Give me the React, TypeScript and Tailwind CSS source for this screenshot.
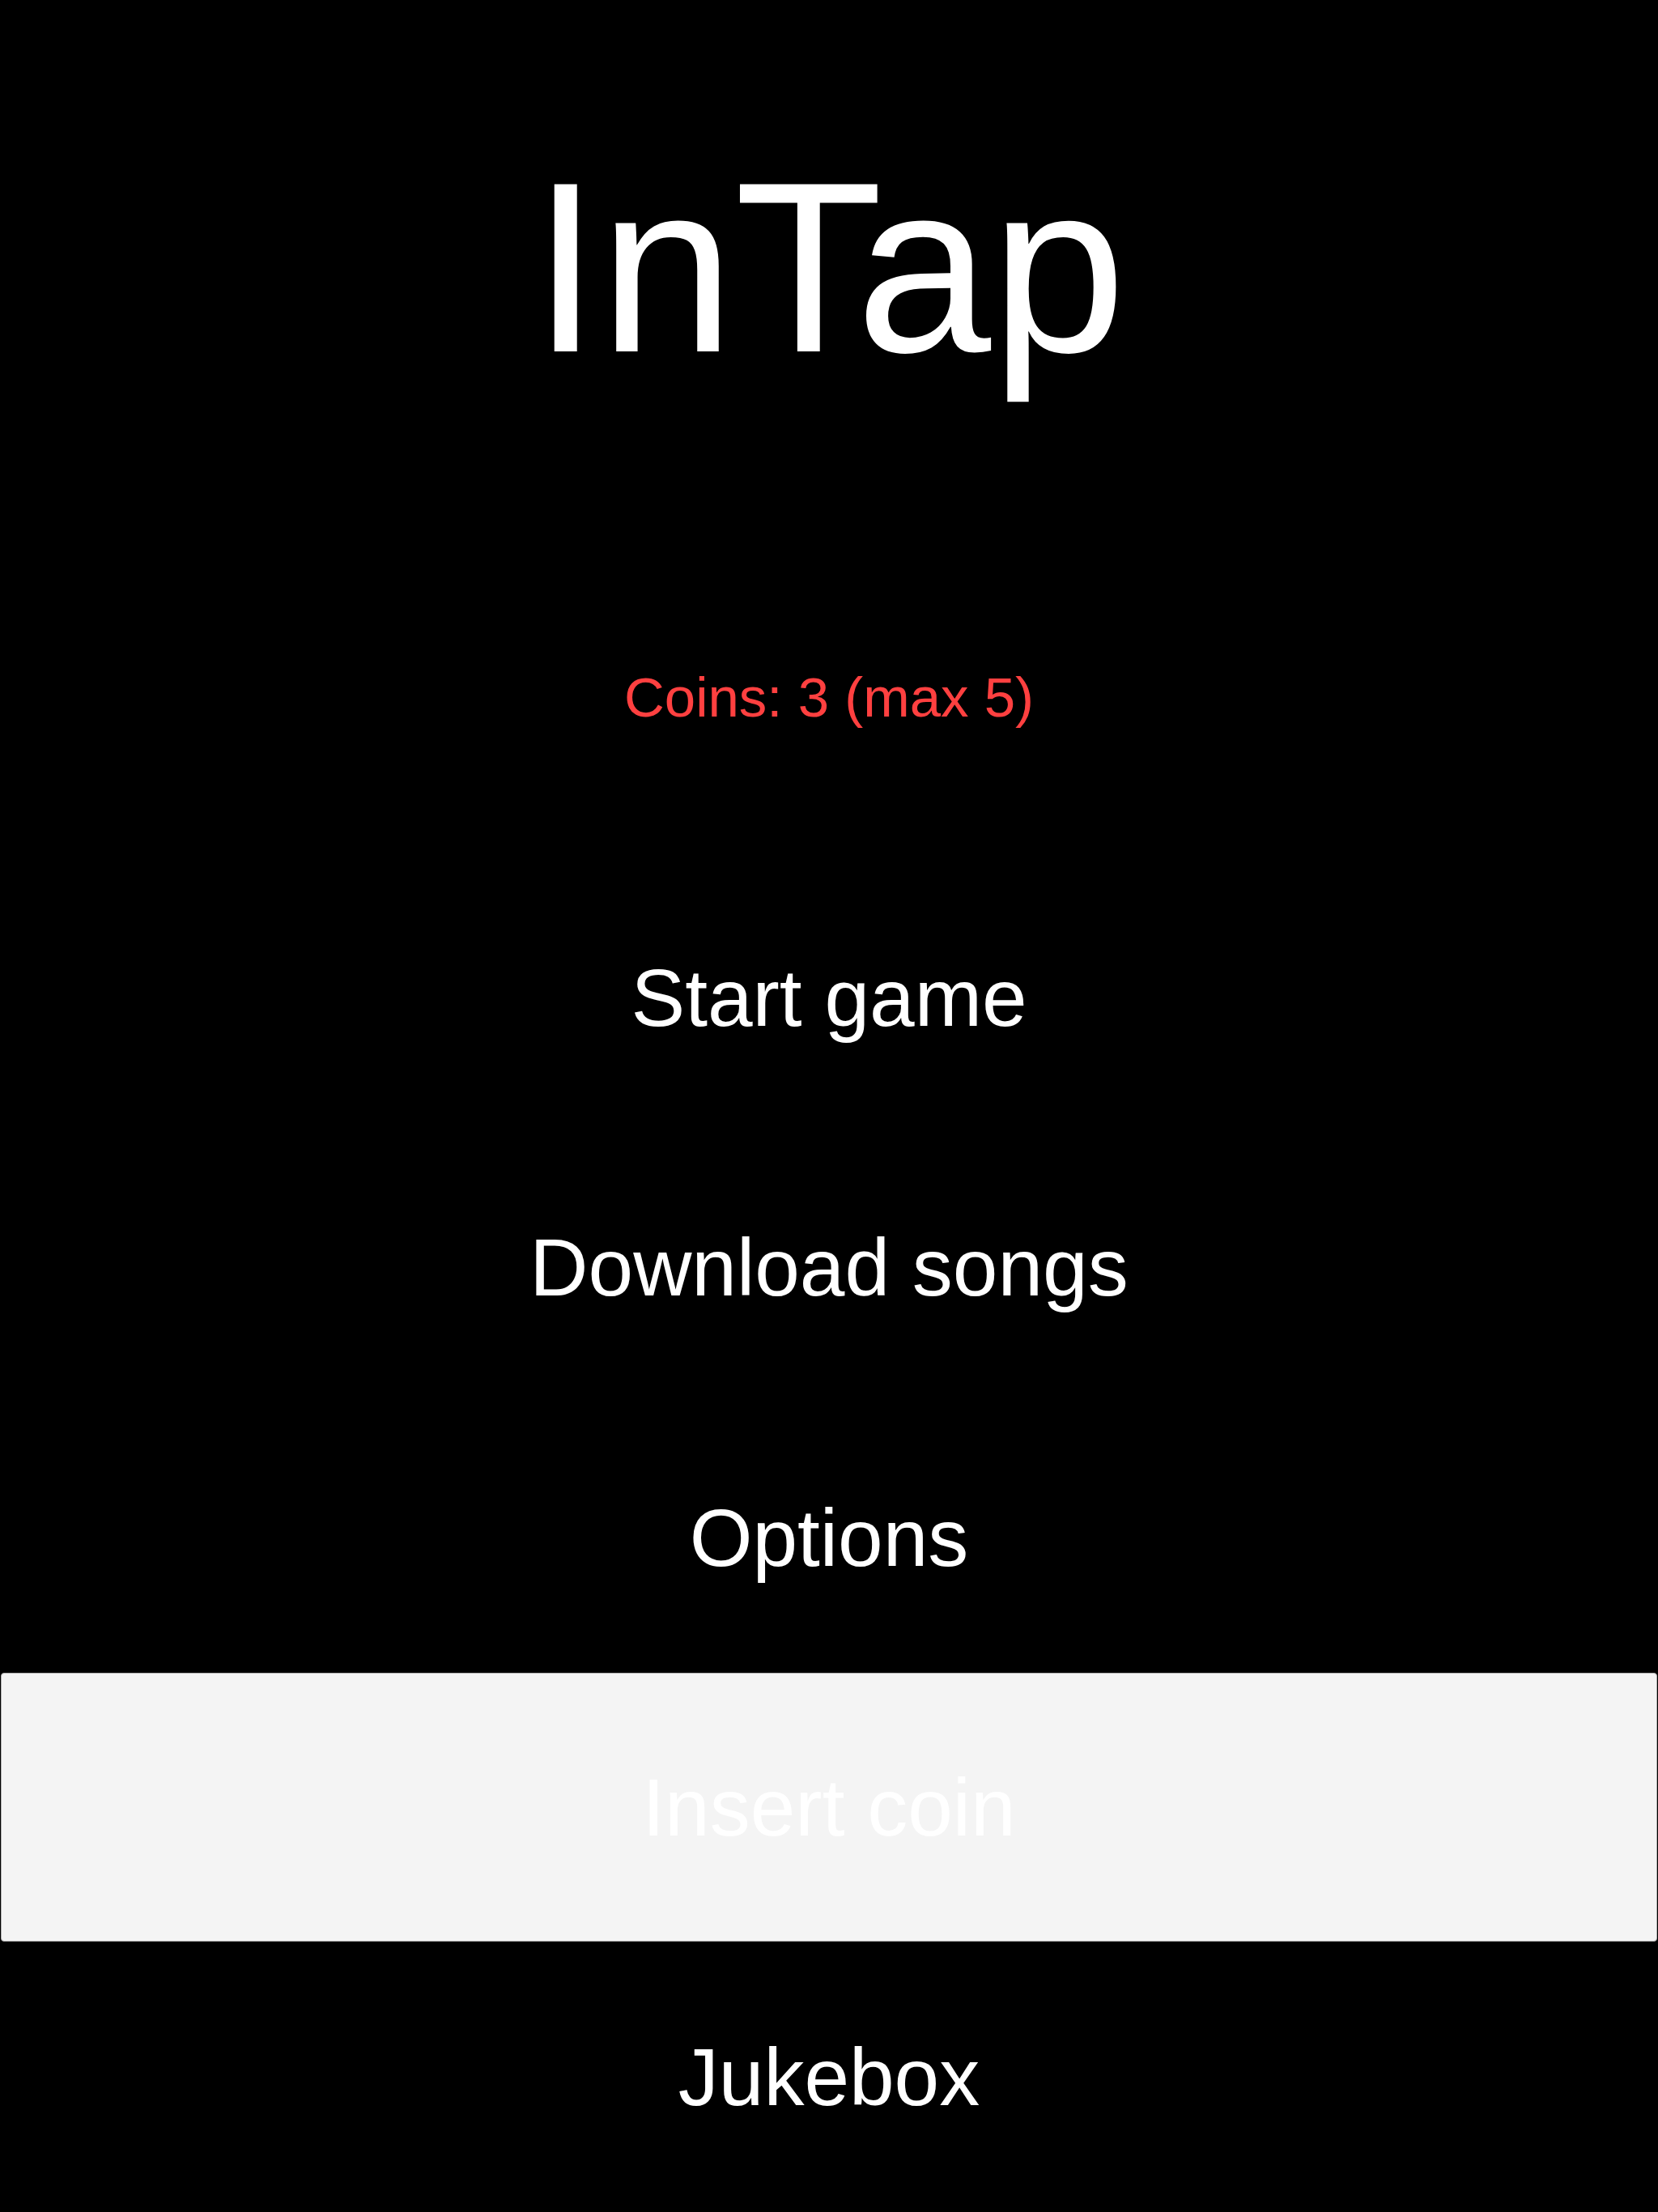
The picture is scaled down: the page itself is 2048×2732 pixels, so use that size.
const menuItems = [
  { label: 'Start game' },
  { label: 'Download songs' },
  { label: 'Options' },
  { label: 'Insert coin', selected: true },
  { label: 'Jukebox' },
];

export default function App() {
  return (
    <div className="flex h-[2732px] w-full flex-col bg-black text-white font-['Liberation_Sans',Arial,sans-serif]">
      <div className="h-[1065px] shrink-0">
        <h1 className="pt-[180px] text-center text-[300px] font-normal leading-none">InTap</h1>
        <p className="mt-[347px] text-center text-[69px] leading-none text-[#ff4040]">Coins: 3 (max 5)</p>
      </div>

      <div className="flex flex-1 flex-col">
        {menuItems.map((item) => (
          <div key={item.label} className="flex flex-1 p-[1px]">
            <button
              className={
                item.selected
                  ? 'flex flex-1 items-center justify-center rounded-[4px] border border-[#b0b0b0] bg-[#f4f4f4] text-[100px] leading-none text-white'
                  : 'flex flex-1 items-center justify-center border border-transparent text-[100px] leading-none text-white'
              }
            >
              {item.label}
            </button>
          </div>
        ))}
      </div>
    </div>
  );
}
